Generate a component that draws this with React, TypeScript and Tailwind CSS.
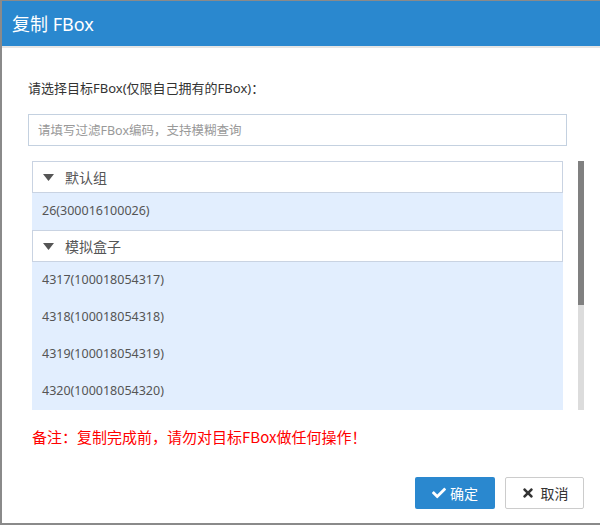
import { FaCheck, FaTimes } from 'react-icons/fa'

const font = { fontFamily: '"Noto Sans", "Noto Sans CJK SC", sans-serif' }
const cjkFont = { fontFamily: '"Noto Sans CJK SC", "Noto Sans", sans-serif' }

function Caret() {
  return (
    <svg width="11" height="7" viewBox="0 0 11 7" className="shrink-0">
      <path d="M0 0h11L5.5 7z" fill="#555" />
    </svg>
  )
}

function Group({ name }: { name: string }) {
  return (
    <div className="flex items-center gap-[11px] h-[32px] pl-[10px] bg-white border border-[#c9d3e2] text-[14px] text-[#555]">
      <Caret />
      <span>{name}</span>
    </div>
  )
}

function Item({ label }: { label: string }) {
  return (
    <div className="flex items-center h-[37px] pl-[10px] bg-[#e2eefe] text-[12.5px] text-[#555]">
      {label}
    </div>
  )
}

export default function App() {
  return (
    <div className="w-[600px] h-[525px] bg-[#8a8a8a] pt-px pl-[2px] pb-[2px] overflow-hidden" style={font}>
      <div className="h-full bg-white flex flex-col">
        {/* Header */}
        <div className="h-[45px] bg-[#2a88cf] flex items-center px-[10px] border-b-2 border-[#e5e5e5] box-content">
          <h1 className="text-[18px] text-white leading-none">复制 FBox</h1>
        </div>

        {/* Body */}
        <div className="flex-1 flex flex-col pl-[26px] pr-[16px]">
          <p className="mt-[30px] text-[13px] text-[#333] leading-[20px]">请选择目标FBox(仅限自己拥有的FBox)：</p>
          <input
            className="mt-[16px] h-[32px] w-[539px] border border-[#c4d1e0] px-[9px] text-[12.5px] outline-none placeholder:text-[#999]"
            placeholder="请填写过滤FBox编码，支持模糊查询"
            style={font}
          />
          <div className="mt-[15px] flex gap-[15px] h-[249px]">
            <div className="ml-[4px] w-[532px] overflow-hidden bg-[#e2eefe]">
              <Group name="默认组" />
              <Item label="26(300016100026)" />
              <Group name="模拟盒子" />
              <Item label="4317(100018054317)" />
              <Item label="4318(100018054318)" />
              <Item label="4319(100018054319)" />
              <Item label="4320(100018054320)" />
            </div>
            <div className="w-[6px] h-full bg-[#dcdcdc] flex flex-col">
              <div className="h-[144px] bg-[#808080]" />
            </div>
          </div>
          <p className="mt-[17px] ml-[4px] text-[15px] text-[#ff0000] leading-[20px]" style={cjkFont}>备注：复制完成前，请勿对目标FBox做任何操作！</p>
          <div className="mt-[30px] flex justify-end gap-[10px]">
            <button className="w-[80px] h-[32px] bg-[#2a88cf] rounded-[2px] text-white text-[14px] flex items-center justify-center gap-[4px]" style={font}>
              <FaCheck className="text-[14px]" />
              确定
            </button>
            <button className="w-[79px] h-[32px] bg-white border border-[#cccccc] rounded-[2px] text-[#333] text-[14px] flex items-center justify-center gap-[6px]" style={font}>
              <FaTimes className="text-[14px]" />
              取消
            </button>
          </div>
        </div>
      </div>
    </div>
  )
}
